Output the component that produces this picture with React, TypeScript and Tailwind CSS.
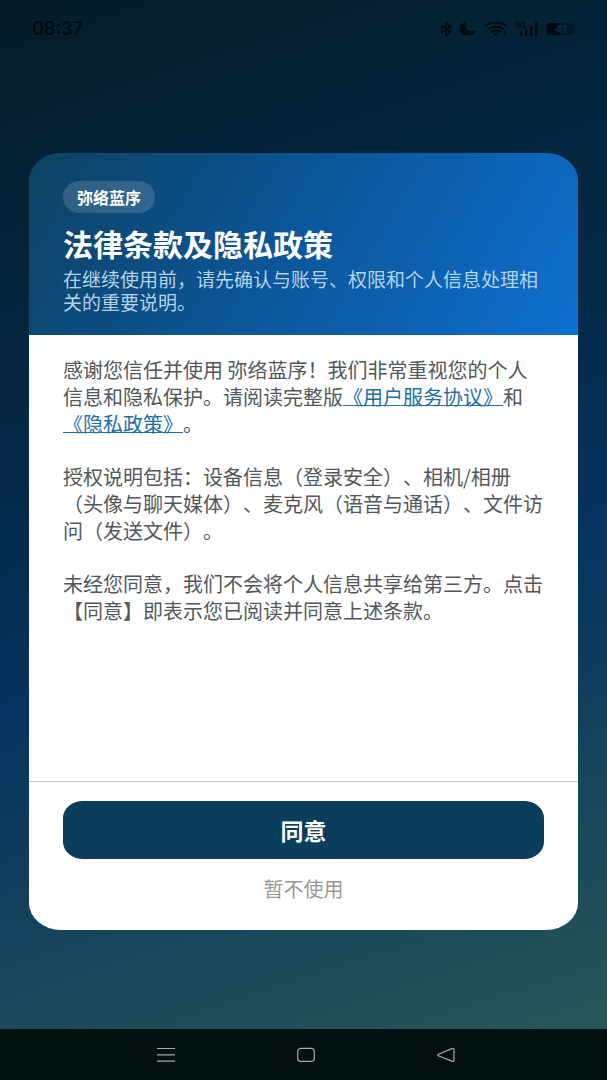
import React from "react";

type AgreementModalProps = {
  appName: string;
  onAgree?: () => void;
  onDecline?: () => void;
};

function StatusBar() {
  return (
    <div className="h-[58px] shrink-0 pl-8 pr-[29px] flex items-center justify-between text-[#010a11]">
      <span className="font-['Inter'] text-lg leading-6 font-semibold">08:37</span>
      <div className="flex items-center gap-[7px]">
        {/* bluetooth */}
        <svg className="w-3 h-4" viewBox="0 0 12 16" fill="none" stroke="currentColor" strokeWidth="1.6">
          <path d="M1 4.5 L10.5 11 L6 14.8 V1.2 L10.5 5 L1 11.5" strokeLinejoin="round" />
          <path d="M0.4 8h1.6M10 8h1.6" />
        </svg>
        {/* do not disturb */}
        <svg className="w-[18px] h-4" viewBox="0 0 18 16" fill="currentColor">
          <path d="M7 1.2C2.8 1.6 0.4 4.7 0.5 8.2c0.1 3.9 3.7 6.5 8.3 6.4 4.3-0.1 7.7-2.2 8.6-5.3-1.7 1.1-4.4 1.5-6.8 0.7C7 8.8 5.3 5 7 1.2Z" />
        </svg>
        {/* wifi */}
        <svg className="w-6 h-4" viewBox="0 0 24 16" fill="none" stroke="currentColor" strokeWidth="1.9">
          <path d="M0.8 5.2C6.5 0.4 17.2 0.4 22.8 5.2" />
          <path d="M3.8 8.3C8 4.8 15.6 4.8 19.8 8.3" />
          <path d="M7 11.2c2.8-2.2 6.8-2.2 9.6 0" />
          <path d="M9 12.6c1.6-1.2 4-1.2 5.6 0l-2.8 2.2Z" fill="currentColor" stroke="none" />
          <path d="M20.8 10v1.800M20.8 13v1.8" />
        </svg>
        {/* mobile signal */}
        <svg className="w-6 h-5" viewBox="0 0 24 20" fill="currentColor">
          <text x="0" y="9" fontSize="8" fontWeight="700" fontFamily="Inter, sans-serif">
            5G
          </text>
          <rect x="5" y="12.5" width="2.4" height="4.5" />
          <rect x="10" y="10.5" width="2.4" height="6.5" />
          <rect x="15" y="7" width="2.4" height="10" />
          <rect x="20" y="3" width="2.6" height="14" />
        </svg>
        {/* battery */}
        <svg className="w-8 h-4" viewBox="0 0 32 16" fill="currentColor">
          <rect x="0.5" y="2" width="28" height="12" rx="3.5" opacity="0.45" />
          <path d="M4 2h10v12H4A3.5 3.5 0 0 1 0.5 10.5v-5A3.5 3.5 0 0 1 4 2Z" />
          <path d="M29.3 5.5c1.6 0.8 1.6 4.2 0 5Z" opacity="0.45" />
          <text x="9" y="12" fontSize="11" fontWeight="700" fontFamily="Inter, sans-serif" fill="#0b2b41">
            41
          </text>
        </svg>
      </div>
    </div>
  );
}

function AgreementModal({ appName, onAgree, onDecline }: AgreementModalProps) {
  return (
    <div
      className="flex-1 flex flex-col rounded-[32px/27px] overflow-hidden"
      role="dialog"
      aria-modal="true"
      aria-labelledby="agreement-title"
    >
      <header className="px-[34px] pt-7 pb-[22px] bg-[linear-gradient(120deg,#0d4262_0%,#0c5596_45%,#0e6fcf_100%)]">
        <span className="inline-flex items-center h-8 px-[14px] rounded-full bg-white/15 text-base font-bold text-white align-top">
          {appName}
        </span>
        <h1 id="agreement-title" className="mt-3 text-3xl leading-9 font-bold text-white">
          法律条款及隐私政策
        </h1>
        <p className="mt-[6px] text-[19px] leading-[23px] text-[#b4d3ea]">
          在继续使用前，请先确认与账号、权限和个人信息处理相关的重要说明。
        </p>
      </header>

      <div className="flex-1 px-[34px] pt-[21px] pb-6 space-y-[26px] bg-white text-xl leading-[27px] text-[#53575c]">
        <p>
          {`感谢您信任并使用 ${appName}！我们非常重视您的个人信息和隐私保护。请阅读完整版`}
          <a href="#terms" className="text-[#1d6fa5] underline underline-offset-0 decoration-1">
            《用户服务协议》
          </a>
          和
          <a href="#privacy" className="text-[#1d6fa5] underline underline-offset-0 decoration-1">
            《隐私政策》
          </a>
          。
        </p>
        <p>
          授权说明包括：设备信息（登录安全）、相机/相册（头像与聊天媒体）、麦克风（语音与通话）、文件访问（发送文件）。
        </p>
        <p>未经您同意，我们不会将个人信息共享给第三方。点击【同意】即表示您已阅读并同意上述条款。</p>
      </div>

      <footer className="px-[34px] pt-[19px] pb-[27px] bg-white border-t border-[#c3c7c9] flex flex-col">
        <button
          type="button"
          onClick={onAgree}
          className="h-[58px] rounded-[20px/17px] bg-[#0b3d5c] text-[23px] font-bold text-white"
        >
          同意
        </button>
        <button type="button" onClick={onDecline} className="mt-4 h-7 text-xl leading-7 text-[#989898]">
          暂不使用
        </button>
      </footer>
    </div>
  );
}

function NavBar() {
  return (
    <nav className="h-[51px] shrink-0 pl-[5px] flex items-center justify-center gap-[122px] bg-[#040f11] text-[#a3abad]">
      <button type="button" aria-label="Recent apps">
        <svg className="w-[18px] h-4" viewBox="0 0 18 16" stroke="currentColor" strokeWidth="1.2">
          <path d="M0 1.5h18M0 7.8h18M0 14.2h18" />
        </svg>
      </button>
      <button type="button" aria-label="Home">
        <svg className="w-[18px] h-4" viewBox="0 0 18 16" fill="none" stroke="currentColor" strokeWidth="1.2">
          <rect x="0.7" y="1.4" width="16.6" height="13" rx="3.2" />
        </svg>
      </button>
      <button type="button" aria-label="Back">
        <svg className="w-[18px] h-4" viewBox="0 0 18 16" fill="none" stroke="currentColor" strokeWidth="1.2">
          <path
            d="M1.3 7.2L14.8 1.6Q17 1 17 3V12.8Q17 14.8 14.8 14.1L1.3 8.7Q0.2 8 1.3 7.2Z"
            strokeLinejoin="round"
          />
        </svg>
      </button>
    </nav>
  );
}

export default function App() {
  return (
    <div
      lang="zh-CN"
      className="min-h-screen flex flex-col font-['Noto_Sans_CJK_SC',sans-serif] [text-spacing-trim:space-all] bg-[linear-gradient(162deg,#051c27_0%,#042339_18%,#042a48_38%,#05325f_56%,#1b485b_80%,#295b57_100%)]"
    >
      <StatusBar />
      <main className="flex-1 flex flex-col px-[29px] pt-[95px] pb-[99px]">
        <AgreementModal appName="弥络蓝序" />
      </main>
      <NavBar />
    </div>
  );
}
